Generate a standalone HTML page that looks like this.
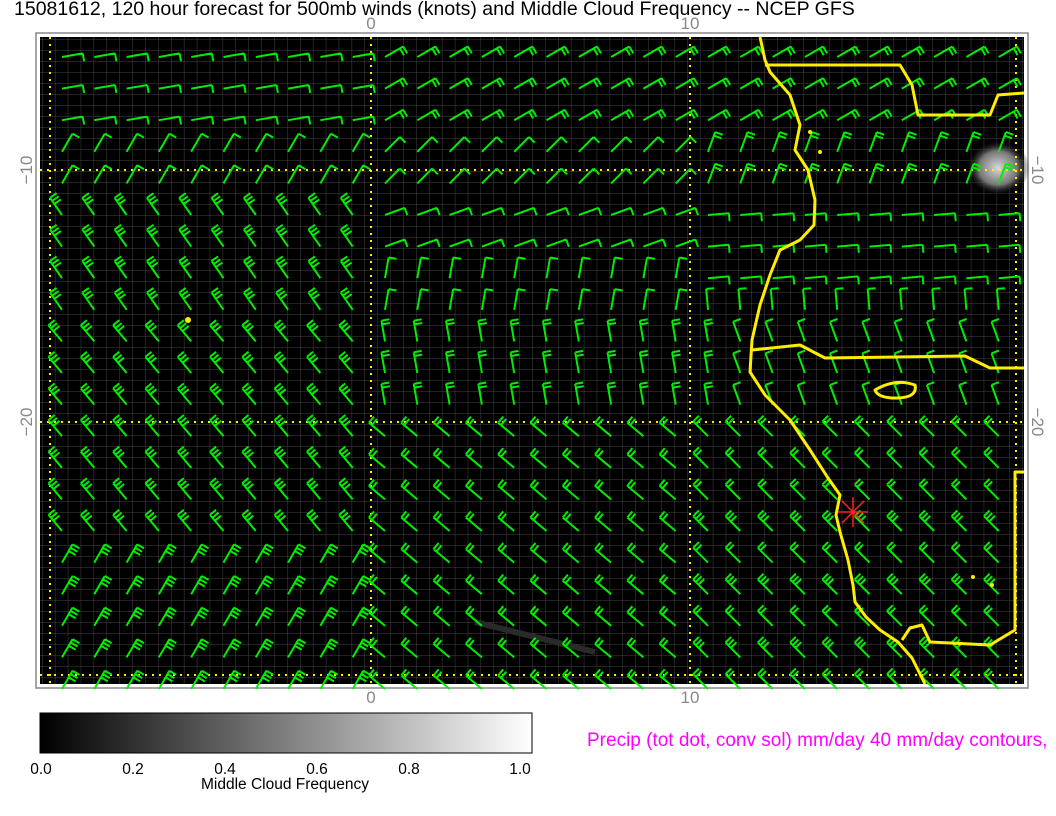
<!DOCTYPE html>
<html><head><meta charset="utf-8"><style>
body{margin:0;background:#fff;width:1056px;height:816px;overflow:hidden;font-family:"Liberation Sans",sans-serif}
</style></head><body>
<svg id="s" width="1056" height="816" xmlns="http://www.w3.org/2000/svg" style="position:absolute;left:0;top:0">
<defs>
<pattern id="g" x="42" y="39" width="12.9" height="11" patternUnits="userSpaceOnUse">
<path d="M0 0V11M0 0H12.9" stroke="#454545" stroke-width="1" fill="none"/>
</pattern>
<radialGradient id="cl" cx="0.5" cy="0.5" r="0.5"><stop offset="0" stop-color="#d8d8d8"/><stop offset="0.6" stop-color="#777"/><stop offset="1" stop-color="#000" stop-opacity="0"/></radialGradient>
<linearGradient id="cb"><stop offset="0" stop-color="#000"/><stop offset="1" stop-color="#fff"/></linearGradient>
</defs>
<text x="14" y="15" font-size="19.5" fill="#000">15081612, 120 hour forecast for 500mb winds (knots) and Middle Cloud Frequency -- NCEP GFS</text>
<rect x="36" y="33" width="992" height="655" fill="#fff" stroke="#888" stroke-width="1.5"/>
<rect x="40" y="37" width="984" height="647" fill="#000"/>
<rect x="40" y="37" width="984" height="647" fill="url(#g)"/>
<ellipse cx="998" cy="168" rx="32" ry="28" fill="url(#cl)"/>
<path d="M475 622 Q540 638 595 652" stroke="#2a2a2a" stroke-width="6" fill="none"/>
<g stroke="#ffee00" stroke-width="2" stroke-dasharray="2 5" fill="none">
<path d="M50 37V684M371 37V684M690 37V684M1016 37V684M40 170H1024M40 422H1024M40 675H1024"/>
</g>
<path id="b" stroke="#00ee00" stroke-width="2" fill="none"/>
<g stroke="#ffee00" stroke-width="3" fill="none" stroke-linejoin="round">
<path d="M760 37L765 60L770 72L790 95L800 125L795 150L808 170L815 200L814 225L800 240L780 250L770 275L760 305L752 340L750 372L765 395L790 420L810 450L828 478L840 495L836 515L840 532L848 560L853 585L855 602L866 617L880 630L898 642L912 658L925 684"/>
<path d="M765 65L900 65L912 85L918 115L990 115L998 95L1024 93"/>
<path d="M752 350L800 345L825 358L965 356L990 368L1024 368"/>
<path d="M875 390Q895 378 915 385Q918 398 895 398Q878 398 875 390Z"/>
<path d="M1024 472H1015V630L990 645L930 642L922 625L910 628L902 640"/>
</g>
<g fill="#ffee00"><circle cx="188" cy="320" r="3"/><circle cx="810" cy="132" r="2"/><circle cx="820" cy="152" r="2"/><circle cx="973" cy="577" r="2"/><circle cx="992" cy="585" r="2"/></g>
<g stroke="#ff2020" stroke-width="1.5"><path d="M838 512H868M853 497V527M842 501L864 523M842 523L864 501"/></g>
<g font-size="17" fill="#888" text-anchor="middle">
<text x="371" y="29">0</text><text x="690" y="29">10</text>
<text x="371" y="703">0</text><text x="690" y="703">10</text>
<text transform="translate(32,170) rotate(-90)" >−10</text>
<text transform="translate(32,422) rotate(-90)">−20</text>
<text transform="translate(1032,170) rotate(90)">−10</text>
<text transform="translate(1032,422) rotate(90)">−20</text>
</g>
<rect x="40" y="713" width="492" height="40" fill="url(#cb)" stroke="#000"/>
<g font-size="15.5" fill="#000" text-anchor="middle">
<text x="41" y="774">0.0</text><text x="133" y="774">0.2</text><text x="225" y="774">0.4</text><text x="317" y="774">0.6</text><text x="409" y="774">0.8</text><text x="520" y="774">1.0</text>
<text x="285" y="789">Middle Cloud Frequency</text>
</g>
<text x="587" y="746" font-size="19" fill="#ff00ff">Precip (tot dot, conv sol) mm/day 40 mm/day contours,</text>
</svg>
<script>
var d='';
function field(x,y){
 if(y<130){ return x<370?[10,1]:[30,2]; }
 if(y<200){ return x<370?[60,1]:(x<700?[45,1]:[70,2]); }
 if(y<330){
   if(x<370) return [125,3];
   if(x<700) return [y<260?20:80,1];
   return [y<300?5:95,1];
 }
 if(y<430){ return x<370?[130,3]:(x<720?[100,2]:[110,1]); }
 if(x<370) return [y>560?60:130,3];
 if(x<700) return [140,2];
 return [135,y%3<1?3:2];
}
for(var r=0;r<21;r++)for(var c=0;c<30;c++){
 var x=62+c*32.3,y=57+r*31.6;
 if(y>692||x>1012)continue;
 var f=field(x,y),a=f[0]*Math.PI/180,n=f[1];
 var L=21,cx=Math.cos(a),sy=-Math.sin(a);
 var ex=x+L*cx,ey=y+L*sy;
 d+='M'+x.toFixed(1)+' '+y.toFixed(1)+'L'+ex.toFixed(1)+' '+ey.toFixed(1);
 var b=a-Math.PI/2,px=Math.cos(b),py=-Math.sin(b);
 for(var k=0;k<n;k++){var t=1-k*0.18,bx=x+L*t*cx,by=y+L*t*sy;
  d+='M'+bx.toFixed(1)+' '+by.toFixed(1)+'l'+(8*px).toFixed(1)+' '+(8*py).toFixed(1);}
}
document.getElementById('b').setAttribute('d',d);
</script>
</body></html>
